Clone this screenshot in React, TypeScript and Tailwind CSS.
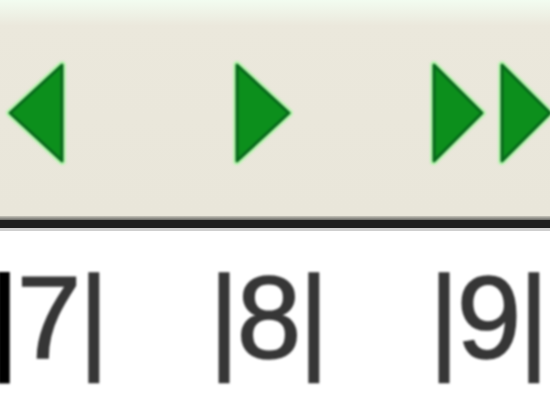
function Tri({ dir, w = 60 }: { dir: "left" | "right"; w?: number }) {
  const pts = dir === "left" ? `${w - 4},4 ${w - 4},100 4,52` : `4,4 4,100 ${w - 4},52`;
  return (
    <svg width={w} height={104} viewBox={`0 0 ${w} 104`} className="shrink-0 blur-[1px]">
      <polygon points={pts} fill="none" stroke="#b8f5b0" strokeWidth={8} strokeLinejoin="round" />
      <polygon points={pts} fill="#0c8f1c" stroke="#06661a" strokeWidth={3} strokeLinejoin="round" />
    </svg>
  );
}

function Cell({ d, first }: { d: string; first?: boolean }) {
  return (
    <div className="w-[220px] shrink-0">
      <span className="inline-block text-[116px] leading-none tracking-[-2.5px] text-[#363636] blur-[0.8px] [-webkit-text-stroke:1.5px_#363636]">
        <span className={first ? "text-black [-webkit-text-stroke:2px_#000]" : ""}>|</span>
        {d}|
      </span>
    </div>
  );
}

export default function App() {
  return (
    <div className="h-[400px] w-[550px] overflow-hidden bg-white" style={{ fontFamily: '"Liberation Sans", Arial, sans-serif' }}>
      <div className="flex h-[216px] items-center bg-gradient-to-b from-[#f2fcf0] via-[#ebe8dc] via-[12%] to-[#e9e6da] pt-[10px]">
        <div className="ml-[6px]">
          <Tri dir="left" />
        </div>
        <div className="ml-[167px]">
          <Tri dir="right" />
        </div>
        <div className="ml-[137px] flex gap-[12px]">
          <Tri dir="right" w={56} />
          <Tri dir="right" w={56} />
        </div>
      </div>
      <div className="h-[4px] bg-gradient-to-b from-[#c8c6bc] to-[#6a6a66]" />
      <div className="h-[8px] bg-[#1e1e1e]" />
      <div className="h-[3px] bg-[#cfcfcf]" />
      <div className="-ml-[11px] flex pt-[29px]">
        <Cell d="7" first />
        <Cell d="8" />
        <Cell d="9" />
      </div>
    </div>
  );
}
